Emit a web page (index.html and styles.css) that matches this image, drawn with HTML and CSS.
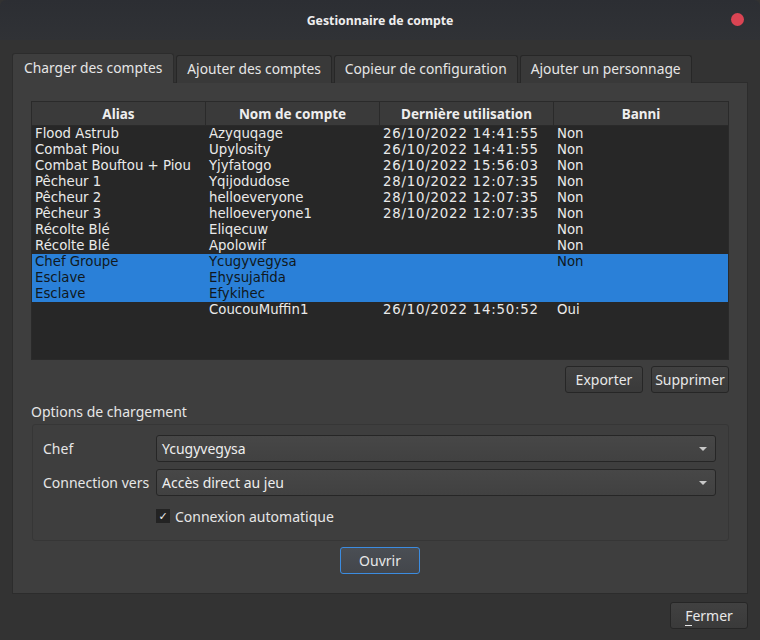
FILE: index.html
```html
<!DOCTYPE html>
<html lang="fr">
<head>
<meta charset="utf-8">
<title>Gestionnaire de compte</title>
<link rel="stylesheet" href="styles.css">
</head>
<body>
<div class="window">
  <div class="titlebar">
    <span class="title">Gestionnaire de compte</span>
    <span class="close"></span>
  </div>
  <div class="content">
    <div class="tabs">
      <div class="tab active">Charger des comptes</div>
      <div class="tab">Ajouter des comptes</div>
      <div class="tab">Copieur de configuration</div>
      <div class="tab">Ajouter un personnage</div>
    </div>
    <div class="pane">
      <div class="table">
        <div class="thead">
          <div class="th">Alias</div>
          <div class="th">Nom de compte</div>
          <div class="th">Dernière utilisation</div>
          <div class="th last">Banni</div>
        </div>
        <div class="tbody">
          <div class="tr"><span>Flood Astrub</span><span>Azyquqage</span><span class="date">26/10/2022 14:41:55</span><span>Non</span></div>
          <div class="tr"><span>Combat Piou</span><span>Upylosity</span><span class="date">26/10/2022 14:41:55</span><span>Non</span></div>
          <div class="tr"><span>Combat Bouftou + Piou</span><span>Yjyfatogo</span><span class="date">26/10/2022 15:56:03</span><span>Non</span></div>
          <div class="tr"><span>Pêcheur 1</span><span>Yqijodudose</span><span class="date">28/10/2022 12:07:35</span><span>Non</span></div>
          <div class="tr"><span>Pêcheur 2</span><span>helloeveryone</span><span class="date">28/10/2022 12:07:35</span><span>Non</span></div>
          <div class="tr"><span>Pêcheur 3</span><span>helloeveryone1</span><span class="date">28/10/2022 12:07:35</span><span>Non</span></div>
          <div class="tr"><span>Récolte Blé</span><span>Eliqecuw</span><span></span><span>Non</span></div>
          <div class="tr"><span>Récolte Blé</span><span>Apolowif</span><span></span><span>Non</span></div>
          <div class="tr sel"><span>Chef Groupe</span><span>Ycugyvegysa</span><span></span><span>Non</span></div>
          <div class="tr sel"><span>Esclave</span><span>Ehysujafida</span><span></span><span></span></div>
          <div class="tr sel"><span>Esclave</span><span>Efykihec</span><span></span><span></span></div>
          <div class="tr"><span></span><span>CoucouMuffin1</span><span class="date">26/10/2022 14:50:52</span><span>Oui</span></div>
        </div>
      </div>
      <div class="actions">
        <button class="btn">Exporter</button>
        <button class="btn">Supprimer</button>
      </div>
      <div class="group-title">Options de chargement</div>
      <div class="group">
        <div class="form">
          <label class="lbl">Chef</label>
          <div class="combo"><span>Ycugyvegysa</span><span class="arrow"></span></div>
          <label class="lbl">Connection vers</label>
          <div class="combo"><span>Accès direct au jeu</span><span class="arrow"></span></div>
          <span></span>
          <div class="check"><span class="box">✓</span><span>Connexion automatique</span></div>
        </div>
      </div>
      <div class="open-row">
        <button class="btn primary">Ouvrir</button>
      </div>
    </div>
    <div class="footer">
      <button class="btn"><u>F</u>ermer</button>
    </div>
  </div>
</div>
</body>
</html>
```
FILE: styles.css
```css
* { box-sizing: border-box; }
html, body {
  margin: 0;
  padding: 0;
  background: #323232;
}
body {
  font-family: "Noto Sans", "DejaVu Sans", sans-serif;
  font-size: 13px;
  color: #e6e6e6;
  width: 760px;
  height: 640px;
  overflow: hidden;
}
.window {
  width: 760px;
  height: 640px;
  background: #333333;
  border-radius: 6px 6px 0 0;
  overflow: hidden;
}
.titlebar {
  height: 40px;
  background: linear-gradient(#2c2e33, #303236);
  display: flex;
  align-items: center;
  justify-content: center;
  position: relative;
}
.title {
  font-weight: bold;
  font-size: 12.3px;
  color: #eeeeee;
}
.close {
  position: absolute;
  right: 16px;
  top: 13px;
  width: 13px;
  height: 13px;
  border-radius: 50%;
  background: #da4453;
}
.content {
  padding: 13px 12px 0 12px;
}
.tabs {
  display: flex;
  align-items: flex-end;
  height: 30px;
  gap: 2px;
  position: relative;
  z-index: 1;
}
.tab {
  height: 28px;
  padding: 0 10px 2px 10px;
  display: flex;
  align-items: center;
  border: 1px solid #272727;
  border-bottom: none;
  border-radius: 3px 3px 0 0;
  background: #393939;
  color: #e6e6e6;
  font-size: 13.8px;
  white-space: nowrap;
}
.tab.active {
  height: 30px;
  background: #3e3e3e;
  padding: 0 11px 3px 11px;
  border-color: #2c2c2c;
}
.pane {
  margin-top: -1px;
  height: 512px;
  background: #3e3e3e;
  border: 1px solid #2c2c2c;
  padding: 18px 18px 0 18px;
  display: flex;
  flex-direction: column;
}
.table {
  height: 259px;
  background: #272727;
  border: 1px solid #2a2a2a;
  display: flex;
  flex-direction: column;
}
.thead {
  display: grid;
  grid-template-columns: 174px 174px 174px 1fr;
  height: 24px;
  background: #3a3a3a;
  border-bottom: 1px solid #2a2a2a;
}
.th {
  display: flex;
  align-items: center;
  justify-content: center;
  font-weight: bold;
  font-size: 13.5px;
  color: #eeeeee;
  border-right: 1px solid #2a2a2a;
}
.th.last { border-right: none; }
.tr {
  display: grid;
  grid-template-columns: 174px 174px 174px 1fr;
  height: 16px;
  line-height: 16px;
  font-family: "DejaVu Sans", sans-serif;
  font-size: 13.3px;
  color: #eaeaea;
}
.tr span {
  padding-left: 3px;
  white-space: nowrap;
  overflow: hidden;
}
.tr .date {
  letter-spacing: 0.8px;
}
.tr.sel {
  background: #2a80d8;
  color: #101820;
}
.actions {
  display: flex;
  justify-content: flex-end;
  gap: 8px;
  margin-top: 6px;
}
.btn {
  font-family: inherit;
  font-size: 14px;
  color: #e8e8e8;
  height: 27px;
  width: 78px;
  padding: 0;
  background: linear-gradient(#414141, #3a3a3a);
  border: 1px solid #262626;
  border-radius: 3px;
}
.btn.primary {
  border-color: #3c8ce0;
  background: linear-gradient(#4a4e54, #43464b);
  width: 80px;
}
.btn u {
  text-decoration: none;
  border-bottom: 1px solid #e8e8e8;
}
.group-title {
  margin-top: 8px;
  height: 22px;
  line-height: 22px;
  font-size: 14px;
  color: #e6e6e6;
}
.group {
  margin-top: 1px;
  margin-left: 1px;
  height: 117px;
  border: 1px solid #363636;
  border-radius: 3px;
  padding: 10px 12px 0 10px;
}
.form {
  display: grid;
  grid-template-columns: 113px 1fr;
  row-gap: 7px;
  align-items: center;
}
.lbl {
  font-size: 14px;
  color: #e6e6e6;
}
.combo {
  height: 27px;
  display: flex;
  align-items: center;
  justify-content: space-between;
  padding: 0 8px 0 5px;
  font-size: 14px;
  color: #eeeeee;
  background: linear-gradient(#474747, #414141);
  border: 1px solid #262626;
  border-radius: 3px;
}
.arrow {
  width: 0;
  height: 0;
  border-left: 4px solid transparent;
  border-right: 4px solid transparent;
  border-top: 4px solid #c8c8c8;
}
.check {
  display: flex;
  align-items: center;
  gap: 5px;
  font-size: 14px;
  height: 20px;
  margin-top: 3px;
}
.box {
  width: 14px;
  height: 14px;
  background: #232323;
  color: #f0f0f0;
  font-size: 11px;
  font-weight: bold;
  line-height: 14px;
  text-align: center;
}
.open-row {
  display: flex;
  justify-content: center;
  margin-top: 6px;
}
.footer {
  display: flex;
  justify-content: flex-end;
  margin-top: 8px;
}
```
